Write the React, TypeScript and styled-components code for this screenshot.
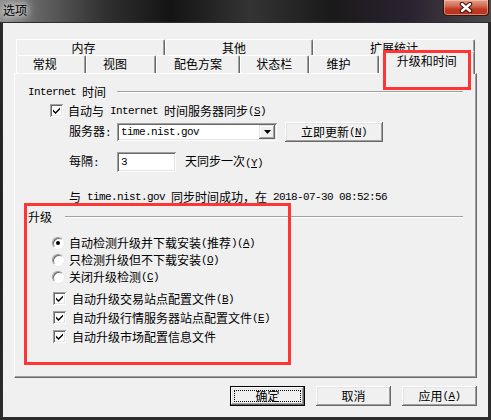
import styled, { createGlobalStyle } from 'styled-components';

const GlobalStyle = createGlobalStyle`
  html, body {
    margin: 0;
    padding: 0;
    background: #161616;
  }
  body {
    font-family: "Noto Sans CJK SC", "Noto Sans", sans-serif;
    font-size: 12px;
    color: #000;
  }
`;

const Window = styled.div`
  position: relative;
  width: 491px;
  height: 420px;
  display: flex;
  flex-direction: column;
  background: linear-gradient(180deg, #2a2a2a 0%, #1d1d1d 60%, #2c2c2c 100%);
  overflow: hidden;
`;

const TitleBar = styled.div`
  height: 22px;
  display: flex;
  align-items: flex-start;
  background: linear-gradient(
    90deg,
    #8c8c8c 0px,
    #666 35px,
    #303030 105px,
    #141414 170px,
    #343434 250px,
    #1a1a1a 330px,
    #2b2230 410px,
    #4a4a4a 491px
  );
`;

const Title = styled.div`
  margin: 3px 0 0 3px;
  line-height: 14px;
  font-size: 12px;
  color: #000;
  text-shadow: 0 0 6px #fff, 0 0 10px #e8e8e8, 0 0 14px #ccc;
`;

const CloseBtn = styled.div`
  margin-left: auto;
  margin-right: 2px;
  width: 46px;
  height: 16px;
  box-sizing: border-box;
  border: 1px solid #3b130c;
  border-top: none;
  border-radius: 0 0 4px 4px;
  background: linear-gradient(180deg, #e3a18f 0%, #d46a50 40%, #c03a22 60%, #b8321c 100%);
  box-shadow: inset 0 0 0 1px rgba(255, 210, 190, 0.5);
  display: flex;
  align-items: center;
  justify-content: center;
`;

const Client = styled.div`
  flex: 1;
  margin: 0 2px 2px;
  border: 1px solid #2d2d2d;
  background: #f0f0f0;
  display: flex;
  flex-direction: column;
  padding: 16px 11px 0 11px;
`;

const TabRow = styled.div`
  display: flex;
  align-items: flex-end;
  margin: 0 2px;
`;

const Tab = styled.div<{ $w: number; $h: number; $pad?: number; $active?: boolean }>`
  position: relative;
  z-index: ${(p) => (p.$active ? 2 : 0)};
  box-sizing: border-box;
  width: ${(p) => p.$w}px;
  height: ${(p) => p.$h}px;
  margin-top: ${(p) => (p.$active ? -4 : 0)}px;
  margin-bottom: ${(p) => (p.$active ? -1 : 0)}px;
  padding: ${(p) => (p.$active ? 2 : 1)}px ${(p) => p.$pad ?? 0}px 0 0;
  background: #f0f0f0;
  border-left: 1px solid #fff;
  border-top: 1px solid #fff;
  border-right: 1px solid #696969;
  border-radius: 2px 2px 0 0;
  box-shadow: inset -1px 0 #a0a0a0;
  text-align: center;
  line-height: 14px;
  font-size: 12px;
  white-space: nowrap;
`;

const Panel = styled.div`
  position: relative;
  z-index: 1;
  box-sizing: border-box;
  height: 305px;
  border-top: 1px solid #fff;
  border-left: 1px solid #fff;
  border-right: 1px solid #696969;
  border-bottom: 1px solid #696969;
  box-shadow: inset -1px -1px #a0a0a0;
  padding: 11px 13px 0 13px;
  display: flex;
  flex-direction: column;
`;

const GroupHead = styled.div<{ $gap: number; $mt?: number }>`
  display: flex;
  align-items: center;
  height: 14px;
  line-height: 14px;
  margin-top: ${(p) => p.$mt ?? 0}px;
  white-space: nowrap;
  &::after {
    content: '';
    flex: 1;
    margin-left: ${(p) => p.$gap}px;
    margin-top: -1px;
    border-top: 1px solid #a0a0a0;
    border-bottom: 1px solid #fff;
  }
`;

const Row = styled.div<{ $h: number; $mt: number; $indent: number }>`
  display: flex;
  align-items: center;
  height: ${(p) => p.$h}px;
  margin-top: ${(p) => p.$mt}px;
  padding-left: ${(p) => p.$indent}px;
  line-height: 14px;
  white-space: nowrap;
`;

const Label = styled.span<{ $w?: number; $ml?: number }>`
  display: inline-block;
  width: ${(p) => (p.$w ? `${p.$w}px` : 'auto')};
  margin-left: ${(p) => p.$ml ?? 0}px;
`;

const Lat = styled.span`
  font-family: "Liberation Mono", "DejaVu Sans Mono", monospace;
  font-size: 11px;
  letter-spacing: -0.6px;
  white-space: pre;
`;

const CheckBox = styled.span<{ $gap: number }>`
  flex: none;
  display: inline-flex;
  align-items: center;
  justify-content: center;
  width: 13px;
  height: 13px;
  margin-right: ${(p) => p.$gap}px;
  background: #fff;
  box-shadow: inset 1px 1px #a0a0a0, inset -1px -1px #fff, inset 2px 2px #696969,
    inset -2px -2px #e3e3e3;
`;

const Radio = styled.span<{ $on?: boolean }>`
  flex: none;
  position: relative;
  box-sizing: border-box;
  width: 12px;
  height: 12px;
  margin-right: 5px;
  border-radius: 50%;
  background: #fff;
  border: 1px solid;
  border-color: #a0a0a0 #fff #fff #a0a0a0;
  box-shadow: inset 1px 1px #696969, 0 0 0 0.5px #e3e3e3;
  &::after {
    content: '';
    display: ${(p) => (p.$on ? 'block' : 'none')};
    position: absolute;
    left: 3px;
    top: 3px;
    width: 4px;
    height: 4px;
    border-radius: 50%;
    background: #000;
  }
`;

const Sunken = styled.div<{ $w: number; $h: number }>`
  box-sizing: border-box;
  width: ${(p) => p.$w}px;
  height: ${(p) => p.$h}px;
  background: #fff;
  box-shadow: inset 1px 1px #a0a0a0, inset -1px -1px #fff, inset 2px 2px #696969,
    inset -2px -2px #e3e3e3;
  padding: 2px 2px 2px 4px;
  display: flex;
  align-items: center;
  line-height: 14px;
`;

const DropBtn = styled.div`
  margin-left: auto;
  box-sizing: border-box;
  width: 16px;
  height: 14px;
  background: #f0f0f0;
  box-shadow: inset -1px -1px #696969, inset 1px 1px #e3e3e3, inset -2px -2px #a0a0a0,
    inset 2px 2px #fff;
  display: flex;
  align-items: center;
  justify-content: center;
`;

const Button = styled.div<{ $w: number; $default?: boolean; $ml?: number }>`
  position: relative;
  box-sizing: border-box;
  width: ${(p) => p.$w}px;
  height: 20px;
  margin-left: ${(p) => p.$ml ?? 0}px;
  background: #f0f0f0;
  border: ${(p) => (p.$default ? '1px solid #000' : 'none')};
  box-shadow: inset -1px -1px #696969, inset 1px 1px #fff, inset -2px -2px #a0a0a0,
    inset 2px 2px #e3e3e3;
  display: flex;
  align-items: center;
  justify-content: center;
  line-height: 14px;
  white-space: nowrap;
  &::after {
    content: '';
    display: ${(p) => (p.$default ? 'block' : 'none')};
    position: absolute;
    inset: 3px;
    border: 1px dotted #000;
  }
`;

const Footer = styled.div`
  display: flex;
  justify-content: flex-end;
  gap: 11px;
  margin-top: 8px;
`;

const Mark = styled.div<{ $x: number; $y: number; $w: number; $h: number }>`
  position: absolute;
  z-index: 5;
  box-sizing: border-box;
  left: ${(p) => p.$x}px;
  top: ${(p) => p.$y}px;
  width: ${(p) => p.$w}px;
  height: ${(p) => p.$h}px;
  border: 3px solid #ff3434;
  pointer-events: none;
`;

function Key({ k }: { k: string }) {
  return (
    <Lat>
      (<u>{k}</u>)
    </Lat>
  );
}

function Tick() {
  return (
    <svg width="9" height="9" viewBox="0 0 9 9">
      <path d="M1 3.5 L3.5 6 L8 1.5 L8 3.5 L3.5 8 L1 5.5 Z" fill="#000" />
    </svg>
  );
}

function CloseX() {
  return (
    <svg width="14" height="11" viewBox="0 0 14 11">
      <path d="M3 2 L11 9 M11 2 L3 9" stroke="#3a1008" strokeWidth="4.4" strokeLinecap="round" />
      <path d="M3 2 L11 9 M11 2 L3 9" stroke="#fff" strokeWidth="2.4" strokeLinecap="round" />
    </svg>
  );
}

export default function App() {
  return (
    <>
      <GlobalStyle />
      <Window>
        <TitleBar>
          <Title>选项</Title>
          <CloseBtn>
            <CloseX />
          </CloseBtn>
        </TitleBar>
        <Client>
          <TabRow>
            <Tab $w={149} $h={16} $pad={14}>内存</Tab>
            <Tab $w={148} $h={16} $pad={10}>其他</Tab>
            <Tab $w={162} $h={16}>扩展统计</Tab>
          </TabRow>
          <TabRow>
            <Tab $w={70} $h={18} $pad={12}>常规</Tab>
            <Tab $w={71} $h={18} $pad={12}>视图</Tab>
            <Tab $w={84} $h={18}>配色方案</Tab>
            <Tab $w={70} $h={18}>状态栏</Tab>
            <Tab $w={70} $h={18} $pad={11}>维护</Tab>
            <Tab $w={97} $h={23} $active>
              升级和时间
            </Tab>
          </TabRow>
          <Panel>
            <GroupHead $gap={11}>
              <Lat>Internet </Lat>时间
            </GroupHead>
            <Row $h={13} $mt={5} $indent={22}>
              <CheckBox $gap={5}>
                <Tick />
              </CheckBox>
              自动与<Lat> Internet </Lat>时间服务器同步<Key k="S" />
            </Row>
            <Row $h={20} $mt={5} $indent={41}>
              <Label $w={48}>
                服务器<Lat>:</Lat>
              </Label>
              <Sunken $w={160} $h={18}>
                <Lat>time.nist.gov</Lat>
                <DropBtn>
                  <svg width="7" height="4" viewBox="0 0 7 4">
                    <path d="M0 0 H7 L3.5 4 Z" fill="#000" />
                  </svg>
                </DropBtn>
              </Sunken>
              <Button $w={98} $ml={8}>
                立即更新<Key k="N" />
              </Button>
            </Row>
            <Row $h={20} $mt={10} $indent={41}>
              <Label $w={48}>
                每隔<Lat>:</Lat>
              </Label>
              <Sunken $w={59} $h={20}>
                <Lat>3</Lat>
              </Sunken>
              <Label $ml={9}>
                天同步一次<Key k="Y" />
              </Label>
            </Row>
            <Row $h={14} $mt={18} $indent={41}>
              与<Lat> time.nist.gov </Lat>同步时间成功，在<Lat> 2018-07-30 08:52:56</Lat>
            </Row>
            <GroupHead $gap={13} $mt={6}>
              升级
            </GroupHead>
            <Row $h={17} $mt={10} $indent={24}>
              <Radio $on />
              自动检测升级并下载安装<Lat>(</Lat>推荐<Lat>)</Lat>
              <Key k="A" />
            </Row>
            <Row $h={17} $mt={0} $indent={24}>
              <Radio />
              只检测升级但不下载安装<Key k="O" />
            </Row>
            <Row $h={17} $mt={0} $indent={24}>
              <Radio />
              关闭升级检测<Key k="C" />
            </Row>
            <Row $h={19} $mt={4} $indent={25}>
              <CheckBox $gap={6}>
                <Tick />
              </CheckBox>
              自动升级交易站点配置文件<Key k="B" />
            </Row>
            <Row $h={19} $mt={0} $indent={25}>
              <CheckBox $gap={6}>
                <Tick />
              </CheckBox>
              自动升级行情服务器站点配置文件<Key k="E" />
            </Row>
            <Row $h={19} $mt={0} $indent={25}>
              <CheckBox $gap={6}>
                <Tick />
              </CheckBox>
              自动升级市场配置信息文件
            </Row>
          </Panel>
          <Footer>
            <Button $w={75} $default>
              确定
            </Button>
            <Button $w={75}>取消</Button>
            <Button $w={75}>
              应用<Key k="A" />
            </Button>
          </Footer>
        </Client>
        <Mark $x={383} $y={50} $w={88} $h={40} />
        <Mark $x={24} $y={203} $w={267} $h={162} />
      </Window>
    </>
  );
}
